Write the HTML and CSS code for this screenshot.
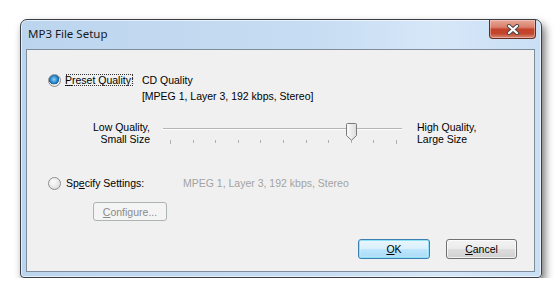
FILE: index.html
```html
<!DOCTYPE html>
<html lang="en">
<head>
  <meta charset="UTF-8">
  <title>MP3 File Setup</title>
  <link rel="stylesheet" href="styles.css">
</head>
<body>

  <div class="window">
    <div class="titlebar">
      <span class="title">MP3 File Setup</span>
      <button class="close" aria-label="Close">
        <svg width="14" height="11" viewBox="0 0 14 11">
          <path d="M3 2 L11 9 M11 2 L3 9" stroke="#4a4a4a" stroke-width="4.2" stroke-linecap="round"/>
          <path d="M3 2 L11 9 M11 2 L3 9" stroke="#ffffff" stroke-width="2.2" stroke-linecap="round"/>
        </svg>
      </button>
    </div>

    <div class="client">
      <div class="option">
        <span class="radio checked"></span>
        <span class="label focus"><u>P</u>reset Quality:</span>
        <div class="detail">
          <div>CD Quality</div>
          <div>[MPEG 1, Layer 3, 192 kbps, Stereo]</div>
        </div>
      </div>

      <div class="slider-row">
        <div class="side left">Low Quality,<br>Small Size</div>
        <div class="slider">
          <div class="track"></div>
          <div class="ticks">
            <i class="long"></i><i></i><i></i><i></i><i></i><i></i><i></i><i></i><i></i><i></i><i class="long"></i>
          </div>
          <svg class="thumb" style="left: 183px" width="11" height="18" viewBox="0 0 11 18">
            <defs>
              <linearGradient id="tg" x1="0" y1="0" x2="1" y2="0">
                <stop offset="0" stop-color="#fbfbfb"/>
                <stop offset="1" stop-color="#dcdcdc"/>
              </linearGradient>
            </defs>
            <path d="M1.5 0.5 H9.5 Q10.5 0.5 10.5 1.5 V12.5 L5.5 17.3 L0.5 12.5 V1.5 Q0.5 0.5 1.5 0.5 Z" fill="url(#tg)" stroke="#7b7b7b"/>
          </svg>
        </div>
        <div class="side right">High Quality,<br>Large Size</div>
      </div>

      <div class="option second">
        <span class="radio"></span>
        <span class="label wide">Sp<u>e</u>cify Settings:</span>
        <div class="detail disabled">MPEG 1, Layer 3, 192 kbps, Stereo</div>
      </div>

      <div class="configure-row">
        <button class="btn disabled"><u>C</u>onfigure...</button>
      </div>

      <div class="actions">
        <button class="btn default"><u>O</u>K</button>
        <button class="btn"><u>C</u>ancel</button>
      </div>
    </div>
  </div>

</body>
</html>
```

FILE: styles.css
```css
body {
  margin: 0;
  padding: 19px 0 0 20px;
  background: #ffffff;
  font-family: "Liberation Sans", Arial, sans-serif;
  font-size: 10.5px;
  color: #000;
}

.window {
  box-sizing: border-box;
  width: 522px;
  height: 259px;
  border: 1px solid #3b3f45;
  border-radius: 7px 7px 4px 4px;
  padding: 0 6px 5px 5px;
  background: linear-gradient(90deg, #bcd5ee 0%, #c6dcf2 55%, #d6e7f8 80%, #c9dff4 100%);
  box-shadow: 3px 5px 9px rgba(0, 0, 0, 0.55), inset 0 0 0 1px rgba(255, 255, 255, 0.6);
  display: flex;
  flex-direction: column;
}

.titlebar {
  height: 29px;
  display: flex;
  align-items: flex-start;
  justify-content: space-between;
}

.title {
  font-family: "Noto Sans", "Open Sans", sans-serif;
  font-size: 11.5px;
  color: #1a1a1a;
  padding: 6px 0 0 2px;
}

.close {
  width: 47px;
  height: 19px;
  margin-right: -1px;
  padding: 0;
  border: 1px solid #6a2a22;
  border-top: none;
  border-radius: 0 0 4px 4px;
  background: linear-gradient(180deg, #e9a899 0%, #d9806c 40%, #c6412a 52%, #c2452e 75%, #d88a75 100%);
  box-shadow: inset 0 0 0 1px rgba(255, 220, 210, 0.45);
  display: flex;
  align-items: center;
  justify-content: center;
}

.close svg {
  display: block;
}

.client {
  flex: 1;
  background: #f0f0f0;
  border: 1px solid #7f8c9c;
  display: flex;
  flex-direction: column;
}

.option {
  display: flex;
  align-items: flex-start;
  padding-left: 21px;
  margin-top: 22px;
  line-height: 16px;
}

.option.second {
  margin-top: 30px;
}

.radio {
  box-sizing: border-box;
  width: 13px;
  height: 13px;
  margin-top: 2px;
  margin-right: 3px;
  border-radius: 50%;
  border: 1px solid #8e8f8f;
  background: radial-gradient(circle at 40% 35%, #ffffff 0%, #e4e4e4 60%, #cfcfcf 100%);
  flex: none;
}

.radio.checked {
  background:
    radial-gradient(circle at 45% 40%, #8fd3f6 0%, #2f8fd1 35%, #1b5f9a 55%, transparent 58%),
    radial-gradient(circle at 40% 35%, #ffffff 0%, #e8e8e8 70%, #d0d0d0 100%);
}

.label {
  box-sizing: border-box;
  width: 78px;
  padding-left: 2px;
}

.label.focus {
  width: auto;
  margin-right: 7px;
  padding: 0 1px;
  outline: 1px dotted #333;
  outline-offset: -3px;
  line-height: 16px;
}

.label.wide {
  width: 119px;
}

.detail.disabled {
  color: #a3a3a3;
}

.slider-row {
  display: flex;
  margin-top: 17px;
  line-height: 12px;
}

.side.left {
  width: 123px;
  margin-right: 13px;
  text-align: right;
}

.side.right {
  margin-left: 15px;
}

.slider {
  position: relative;
  width: 239px;
  height: 24px;
}

.track {
  position: absolute;
  left: 0;
  right: 0;
  top: 7px;
  height: 1px;
  background: #b5b5b5;
  border-bottom: 1px solid #ffffff;
}

.ticks {
  position: absolute;
  left: 7px;
  right: 5px;
  top: 19px;
  display: flex;
  justify-content: space-between;
}

.ticks i {
  width: 1px;
  height: 3px;
  background: #b0b0b0;
}

.ticks i.long {
  height: 4px;
}

.thumb {
  position: absolute;
  top: 2px;
}

.configure-row {
  padding-left: 66px;
  margin-top: 11px;
}

.btn {
  box-sizing: border-box;
  height: 20px;
  width: 71px;
  padding: 0;
  font-family: "Liberation Sans", Arial, sans-serif;
  font-size: 10.5px;
  color: #000;
  border: 1px solid #707070;
  border-radius: 3px;
  background: linear-gradient(180deg, #f3f3f3 0%, #ebebeb 48%, #dddddd 52%, #d0d0d0 100%);
  box-shadow: inset 0 0 0 1px rgba(255, 255, 255, 0.7);
}

.btn.disabled {
  width: 74px;
  height: 19px;
  color: #8b8b8b;
  border-color: #adb2b5;
  background: #f4f4f4;
  box-shadow: none;
}

.btn.default {
  width: 72px;
  border-color: #3c7fb1;
  background: linear-gradient(180deg, #eaf6fd 0%, #d9f0fc 48%, #bee6fd 52%, #a7d9f5 100%);
  box-shadow: inset 0 0 0 1px #8de2f9, inset 0 0 2px 1px rgba(255, 255, 255, 0.6);
}

.actions {
  display: flex;
  justify-content: flex-end;
  gap: 16px;
  margin-top: auto;
  padding: 0 17px 12px 0;
}
```
